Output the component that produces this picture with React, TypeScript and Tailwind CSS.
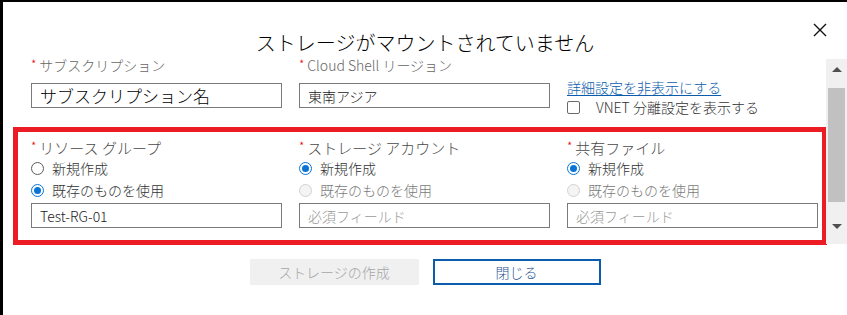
import React from "react"

type RadioState = "off" | "on" | "disabled"

const Req = () => <span className="mr-[3px] mt-[1px] self-start text-[12px] leading-[12px] text-[#e50000]">*</span>

function Radio({ state, label }: { state: RadioState; label: string }) {
  return (
    <div className="flex h-[22px] items-center gap-[8px]">
      {state === "on" ? (
        <span className="flex h-[13px] w-[13px] items-center justify-center rounded-full border-[1.5px] border-[#0a74d6] bg-white">
          <span className="h-[7px] w-[7px] rounded-full bg-[#0a74d6]" />
        </span>
      ) : state === "off" ? (
        <span className="h-[13px] w-[13px] rounded-full border border-[#5c5c5c] bg-white" />
      ) : (
        <span className="h-[13px] w-[13px] rounded-full border border-[#d2d2d2] bg-[#f4f4f4]" />
      )}
      <span className={state === "disabled" ? "text-[14px] leading-[20px] text-[#7a7a7a]" : "text-[14px] leading-[20px] text-[#333]"}>
        {label}
      </span>
    </div>
  )
}

function TextBox({ value, placeholder, big }: { value?: string; placeholder?: string; big?: boolean }) {
  return (
    <div className="flex h-[25px] items-center border border-[#7a7a7a] bg-white px-[8px]">
      {value ? (
        <span className={big ? "text-[17px] leading-[20px] text-black" : "text-[14px] leading-[18px] text-[#222]"}>{value}</span>
      ) : (
        <span className="text-[14px] leading-[18px] text-[#9a9a9a]">{placeholder}</span>
      )}
    </div>
  )
}

function Pick({ label, first, second, value }: { label: string; first: RadioState; second: RadioState; value?: string }) {
  return (
    <div className="flex flex-col">
      <div className="flex h-[18px] items-center text-[15px] leading-[18px] text-[#4a4a4a]">
        <Req />
        {label}
      </div>
      <Radio state={first} label="新規作成" />
      <Radio state={second} label="既存のものを使用" />
      <div className="mt-[2px]">
        <TextBox value={value} placeholder="必須フィールド" />
      </div>
    </div>
  )
}

export default function App() {
  return (
    <div className="h-[315px] w-[847px] overflow-hidden border-l-[3px] border-t-2 border-black bg-white font-['Noto_Sans_CJK_JP',sans-serif] font-light">
      {/* header */}
      <div className="relative h-[55px] pt-[31px] text-center">
        <h1 className="text-[20px] leading-[20px] font-light text-black">ストレージがマウントされていません</h1>
        <button type="button" className="absolute right-[20px] top-[21px] text-black" aria-label="閉じる">
          <svg width="14" height="14" viewBox="0 0 14 14">
            <path d="M1 1L13 13M13 1L1 13" stroke="#111" strokeWidth="1.4" fill="none" />
          </svg>
        </button>
      </div>

      {/* body + scrollbar */}
      <div className="flex h-[188px]">
        <div className="w-[823px]">
          <div className="grid h-[51px] grid-cols-[251px_251px_251px] gap-x-[17px] pl-[28px]">
            <div>
              <div className="flex h-[16px] items-center text-[14px] leading-[16px] text-[#666]">
                <Req />
                サブスクリプション
              </div>
              <div className="mt-[10px]">
                <TextBox value="サブスクリプション名" big />
              </div>
            </div>
            <div>
              <div className="flex h-[16px] items-center text-[14px] leading-[16px] text-[#666]">
                <Req />
                Cloud Shell リージョン
              </div>
              <div className="mt-[10px]">
                <TextBox value="東南アジア" />
              </div>
            </div>
            <div className="pt-[22px]">
              <a href="#" className="block text-[14px] leading-[17px] text-[#0b5cad] underline underline-offset-2">
                詳細設定を非表示にする
              </a>
              <div className="mt-[2px] flex items-center">
                <span className="h-[13px] w-[13px] rounded-[2px] border border-[#6a6a6a] bg-white" />
                <span className="ml-[16px] text-[14px] leading-[18px] text-[#333]">VNET 分離設定を表示する</span>
              </div>
            </div>
          </div>

          <div className="ml-[10px] mt-[19px] w-[814px] border-[5px] border-[#ec1c24] pb-[12px] pl-[13px] pt-[7px]">
            <div className="grid grid-cols-[251px_251px_251px] gap-x-[17px]">
              <Pick label="リソース グループ" first="off" second="on" value="Test-RG-01" />
              <Pick label="ストレージ アカウント" first="on" second="disabled" />
              <Pick label="共有ファイル" first="on" second="disabled" />
            </div>
          </div>
        </div>

        <div className="mt-[2px] flex h-[185px] w-[21px] flex-col items-center bg-[#f0f0f0] pt-[8px]">
          <span className="h-0 w-0 border-x-[5px] border-b-[5px] border-x-transparent border-b-[#505050]" />
          <span className="mt-[16px] h-[114px] w-[17px] bg-[#c1c1c1]" />
          <span className="mt-[22px] h-0 w-0 border-x-[5px] border-t-[5px] border-x-transparent border-t-[#505050]" />
        </div>
      </div>

      {/* footer */}
      <div className="flex justify-center gap-[14px] pt-[14px]">
        <button type="button" className="h-[26px] w-[169px] bg-[#f0f0f0] text-[14px] leading-[18px] text-[#a6a6a6]">
          ストレージの作成
        </button>
        <button type="button" className="h-[26px] w-[168px] border-2 border-[#0b5cad] bg-white text-[14px] leading-[18px] text-[#2b5797]">
          閉じる
        </button>
      </div>
    </div>
  )
}
